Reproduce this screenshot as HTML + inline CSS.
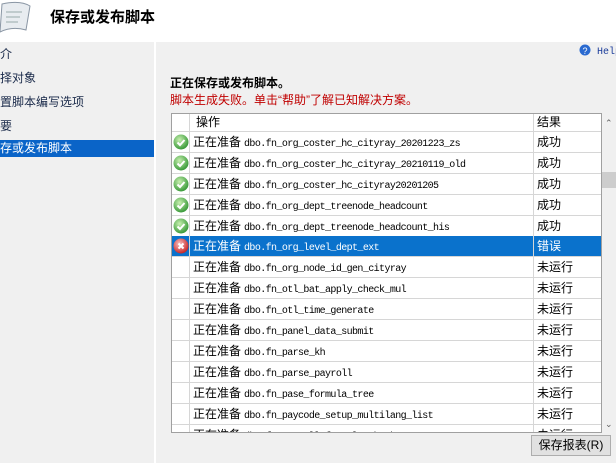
<!DOCTYPE html>
<html><head><meta charset="utf-8"><style>
*{margin:0;padding:0;box-sizing:border-box}
body{width:616px;height:463px;overflow:hidden;background:#f0f0f0;font-family:"Liberation Sans","Noto Sans CJK SC",sans-serif;font-size:12px;color:#000;position:relative}
.hdr{position:absolute;left:0;top:0;width:616px;height:42px;background:#fff}
.title{position:absolute;left:50px;top:6px;font-size:15px;font-weight:bold}
.nav{position:absolute;left:0;top:42px;width:156px;height:421px;background:#f0f0f0;border-right:2px solid #fff}
.nav div{height:24px;line-height:20px;padding-left:0;font-size:12px;color:#1a2a4a}
.nav .sel{background:#0a64c8;color:#fff;height:17px;line-height:17px;margin-top:0}
.help{position:absolute;left:579px;top:44px;font-family:"Liberation Mono",monospace;font-size:10px;color:#1a3c9a;white-space:nowrap}
.h1{position:absolute;left:170px;top:74px;font-weight:bold;font-size:12px}
.err{position:absolute;left:170px;top:91px;color:#c00000;font-size:12px}
.tbl{position:absolute;left:171px;top:113px;width:431px;height:320px;background:#fff;border:1px solid #a0a0a0;overflow:hidden}
.row{position:absolute;left:0;width:430px;height:21px;border-bottom:1px solid #d6d6d6;line-height:20px;white-space:nowrap}
.c1{position:absolute;left:0;width:18px;height:100%;border-right:1px solid #d6d6d6}
.c2{position:absolute;left:19px;width:343px;height:100%;border-right:1px solid #d6d6d6;padding-left:2px}
.c3{position:absolute;left:363px;padding-left:2px}
.m{font-family:"Liberation Mono",monospace;font-size:10px;letter-spacing:-0.6px;margin-left:3px}
.row.s{background:#0a72cc;color:#fff}
.ic{position:absolute;left:1px;top:2px}
.sb{position:absolute;left:602px;top:113px;width:14px;height:320px;background:#f0f0f0}
.thumb{position:absolute;left:602px;top:172px;width:14px;height:16px;background:#cdcdcd}
.btn{position:absolute;left:531px;top:435px;width:80px;height:21px;border:1px solid #adadad;background:#e1e1e1;text-align:center;line-height:19px;font-size:12px}
</style></head><body>
<div class="hdr">
<svg style="position:absolute;left:0;top:0" width="34" height="34"><path d="M2 4 Q20 0 30 6 L26 30 Q12 26 0 32Z" fill="#e8ecf0" stroke="#8a96a4"/><path d="M6 12h16M6 17h14M6 22h12" stroke="#9aa" /></svg>
<div class="title">保存或发布脚本</div>
</div>
<div class="nav">
<div style="margin-top:2px">介</div>
<div>择对象</div>
<div>置脚本编写选项</div>
<div>要</div>
<div class="sel">存或发布脚本</div>
</div>
<div class="help"><svg width="12" height="12" style="vertical-align:-2px"><circle cx="6" cy="6" r="5.5" fill="#2a6ad0"/><text x="3.5" y="10" font-size="9" fill="#fff" font-family="Liberation Sans">?</text></svg> Help</div>
<div class="h1">正在保存或发布脚本。</div>
<div class="err">脚本生成失败。单击“帮助”了解已知解决方案。</div>
<svg width="0" height="0" style="position:absolute"><defs>
<radialGradient id="g" cx="40%" cy="35%" r="65%"><stop offset="0" stop-color="#c8f0b0"/><stop offset="1" stop-color="#3a9a3a"/></radialGradient>
<radialGradient id="r" cx="40%" cy="35%" r="65%"><stop offset="0" stop-color="#f8c0c0"/><stop offset="1" stop-color="#c82828"/></radialGradient>
<g id="ok"><circle cx="8" cy="8" r="7.5" fill="url(#g)"/><path d="M4.5 8.5l2.5 2.5 4.5-5" stroke="#fff" stroke-width="2" fill="none"/></g>
<g id="ko"><circle cx="8" cy="8" r="7.5" fill="url(#r)"/><path d="M5.5 5.5l5 5M10.5 5.5l-5 5" stroke="#fff" stroke-width="2"/></g>
</defs></svg>
<div class="tbl">
<div class="row" style="top:0;height:18px;line-height:17px"><div class="c1"></div><div class="c2" style="padding-left:5px">操作</div><div class="c3">结果</div></div>
<div class="row" style="top:18px"><div class="c1"><svg class="ic" width="16" height="16"><use href="#ok"/></svg></div><div class="c2">正在准备<span class="m">dbo.fn_org_coster_hc_cityray_20201223_zs</span></div><div class="c3">成功</div></div>
<div class="row" style="top:39px"><div class="c1"><svg class="ic" width="16" height="16"><use href="#ok"/></svg></div><div class="c2">正在准备<span class="m">dbo.fn_org_coster_hc_cityray_20210119_old</span></div><div class="c3">成功</div></div>
<div class="row" style="top:60px"><div class="c1"><svg class="ic" width="16" height="16"><use href="#ok"/></svg></div><div class="c2">正在准备<span class="m">dbo.fn_org_coster_hc_cityray20201205</span></div><div class="c3">成功</div></div>
<div class="row" style="top:81px"><div class="c1"><svg class="ic" width="16" height="16"><use href="#ok"/></svg></div><div class="c2">正在准备<span class="m">dbo.fn_org_dept_treenode_headcount</span></div><div class="c3">成功</div></div>
<div class="row" style="top:102px"><div class="c1"><svg class="ic" width="16" height="16"><use href="#ok"/></svg></div><div class="c2">正在准备<span class="m">dbo.fn_org_dept_treenode_headcount_his</span></div><div class="c3">成功</div></div>
<div class="row s" style="top:122px"><div class="c1"><svg class="ic" width="16" height="16"><use href="#ko"/></svg></div><div class="c2">正在准备<span class="m">dbo.fn_org_level_dept_ext</span></div><div class="c3">错误</div></div>
<div class="row" style="top:143px"><div class="c1"></div><div class="c2">正在准备<span class="m">dbo.fn_org_node_id_gen_cityray</span></div><div class="c3">未运行</div></div>
<div class="row" style="top:164px"><div class="c1"></div><div class="c2">正在准备<span class="m">dbo.fn_otl_bat_apply_check_mul</span></div><div class="c3">未运行</div></div>
<div class="row" style="top:185px"><div class="c1"></div><div class="c2">正在准备<span class="m">dbo.fn_otl_time_generate</span></div><div class="c3">未运行</div></div>
<div class="row" style="top:206px"><div class="c1"></div><div class="c2">正在准备<span class="m">dbo.fn_panel_data_submit</span></div><div class="c3">未运行</div></div>
<div class="row" style="top:227px"><div class="c1"></div><div class="c2">正在准备<span class="m">dbo.fn_parse_kh</span></div><div class="c3">未运行</div></div>
<div class="row" style="top:248px"><div class="c1"></div><div class="c2">正在准备<span class="m">dbo.fn_parse_payroll</span></div><div class="c3">未运行</div></div>
<div class="row" style="top:269px"><div class="c1"></div><div class="c2">正在准备<span class="m">dbo.fn_pase_formula_tree</span></div><div class="c3">未运行</div></div>
<div class="row" style="top:290px"><div class="c1"></div><div class="c2">正在准备<span class="m">dbo.fn_paycode_setup_multilang_list</span></div><div class="c3">未运行</div></div>
<div class="row" style="top:311px"><div class="c1"></div><div class="c2">正在准备<span class="m">dbo.fn_payroll_formula_check</span></div><div class="c3">未运行</div></div>
</div>
<div class="sb"></div><div class="thumb"></div>
<div style="position:absolute;left:605px;top:118px;font-size:9px;color:#606060">⌃</div>
<div style="position:absolute;left:605px;top:419px;font-size:9px;color:#606060">⌄</div>
<div class="btn">保存报表(R)</div>
</body></html>
